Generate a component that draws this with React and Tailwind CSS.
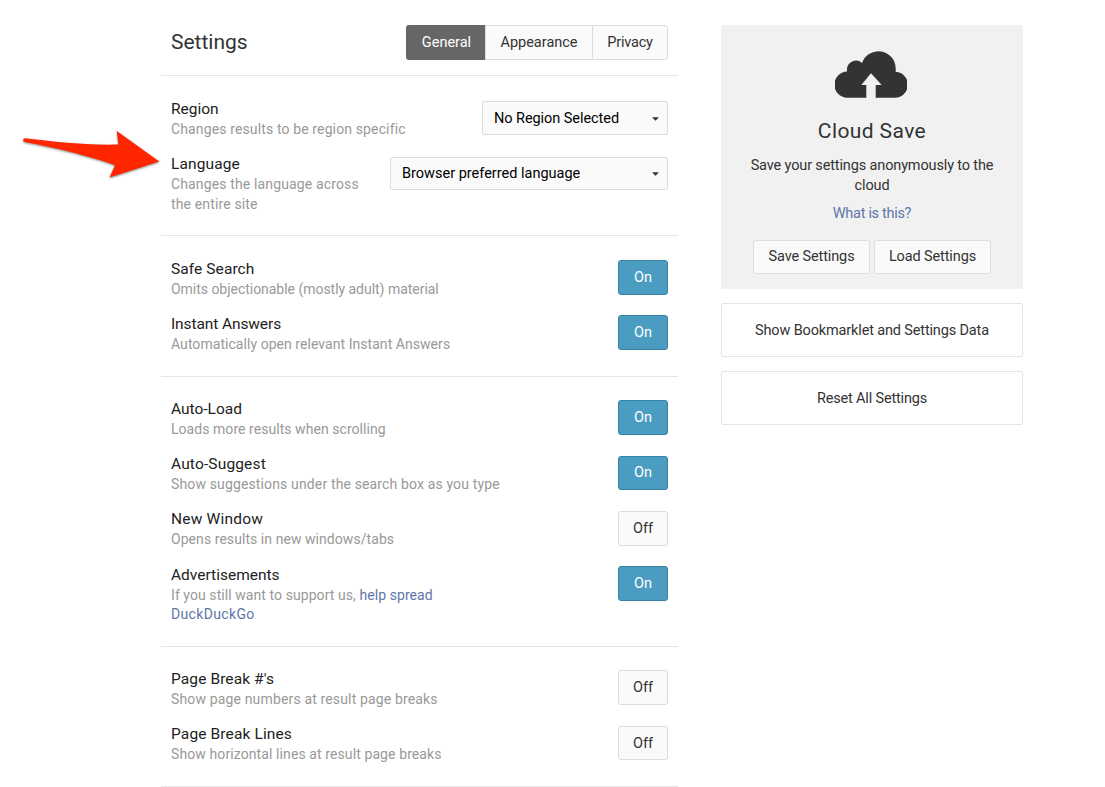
const link = "text-[#6076a8]";

function Toggle({ on, className = "" }) {
  const tone = on
    ? "bg-[#4a9dc1] border-[#3584a6] text-white"
    : "bg-[#fafafa] border-[#dddddd] text-[#333333]";
  return (
    <button
      className={`flex w-[50px] shrink-0 items-center justify-center rounded-[3px] border text-[14.5px] ${tone} ${className}`}
    >
      {on ? "On" : "Off"}
    </button>
  );
}

function Select({ label, className = "" }) {
  return (
    <button
      className={`flex shrink-0 items-center justify-between rounded-[2px] border border-[#dddddd] bg-[#fafafa] pr-[8px] text-[14.5px] text-black ${className}`}
    >
      <span>{label}</span>
      <svg width="7" height="4" viewBox="0 0 7 4">
        <path d="M0.2 0.2H6.8L3.9 3.6H3.1Z" fill="#333" />
      </svg>
    </button>
  );
}

function Row({ title, desc, track = "", titleTrack = "", className = "h-[55px]", children }) {
  return (
    <div className={`flex items-start justify-between ${className}`}>
      <div>
        <div className={`text-[15.5px] leading-[20px] text-[#222222] ${titleTrack}`}>{title}</div>
        <div className={`text-[14px] leading-[20px] whitespace-nowrap text-[#999999] ${track}`}>{desc}</div>
      </div>
      {children}
    </div>
  );
}

function Section({ className, children }) {
  return <section className={`border-b border-[#e5e5e5] px-[10px] ${className}`}>{children}</section>;
}

export default function App() {
  return (
    <div className="relative flex h-[787px] w-[1105px] items-start overflow-hidden bg-white pl-[161px] font-['Roboto','Liberation_Sans',sans-serif] text-[#333333]">
      <svg className="absolute top-[120px] left-[15px]" width="155" height="70" viewBox="15 120 155 70">
        <path
          d="M25 138.2C50 141 85 145.5 118.3 144.5L116.8 131L159.3 161.5L109.5 177.5L115 165.2C90 156 52 147 24.5 142C22.6 141.2 22.8 138.2 25 138.2Z"
          fill="#ff2600"
          className="drop-shadow-[0_1px_1px_rgba(0,0,0,0.45)]"
        />
      </svg>

      <main className="w-[517px]">
        <header className="flex h-[76px] items-start justify-between border-b border-[#e5e5e5] px-[10px] pt-[25px]">
          <h1 className="text-[21px] leading-[34px]">Settings</h1>
          <nav className="flex h-[35px] text-[14.5px]">
            <button className="w-[79px] rounded-l-[3px] bg-[#666666] pl-[2px] text-white">General</button>
            <button className="w-[107px] border-y border-l border-[#dddddd] bg-[#fafafa]">Appearance</button>
            <button className="w-[76px] rounded-r-[3px] border border-[#dddddd] bg-[#fafafa] tracking-[-0.2px]">Privacy</button>
          </nav>
        </header>

        <Section className="h-[160px] pt-[23px]">
          <Row title="Region" track="tracking-[0.13px]" desc="Changes results to be region specific">
            <Select label="No Region Selected" className="mt-[2px] h-[34px] w-[186px] pt-px pl-[11px] tracking-[-0.06px]" />
          </Row>
          <Row
            title="Language"
            titleTrack="tracking-[0.12px]"
            track="tracking-[0.14px]"
            desc={<>Changes the language across<br />the entire site</>}
          >
            <Select label="Browser preferred language" className="mt-[3px] h-[33px] w-[278px] pl-[11px]" />
          </Row>
        </Section>

        <Section className="h-[141px] pt-[23px]">
          <Row title="Safe Search" titleTrack="tracking-[0.08px]" track="tracking-[-0.03px]" desc="Omits objectionable (mostly adult) material">
            <Toggle on className="mt-px h-[35px]" />
          </Row>
          <Row title="Instant Answers" titleTrack="tracking-[-0.1px]" track="tracking-[0.05px]" desc="Automatically open relevant Instant Answers">
            <Toggle on className="mt-px h-[35px]" />
          </Row>
        </Section>

        <Section className="h-[270px] pt-[22px]">
          <Row title="Auto-Load" track="tracking-[0.05px]" desc="Loads more results when scrolling">
            <Toggle on className="mt-px h-[35px]" />
          </Row>
          <Row title="Auto-Suggest" titleTrack="tracking-[0.15px]" track="tracking-[0.14px]" desc="Show suggestions under the search box as you type">
            <Toggle on className="mt-[2px] h-[34px]" />
          </Row>
          <Row title="New Window" titleTrack="tracking-[0.2px]" track="tracking-[0.06px]" desc="Opens results in new windows/tabs" className="h-[56px]">
            <Toggle className="mt-[2px] h-[35px]" />
          </Row>
          <Row
            title="Advertisements"
            track="tracking-[0.07px]"
            desc={
              <>
                If you still want to support us,{" "}
                <a className={link}>
                  help spread
                  <br />
                  <span className="block leading-[19px] tracking-[0.35px]">DuckDuckGo</span>
                </a>
              </>
            }
          >
            <Toggle on className="mt-px h-[35px]" />
          </Row>
        </Section>

        <Section className="h-[140px] pt-[22px]">
          <Row title="Page Break #'s" titleTrack="tracking-[0.1px]" track="tracking-[0.15px]" desc="Show page numbers at result page breaks">
            <Toggle className="mt-px h-[35px]" />
          </Row>
          <Row title="Page Break Lines" titleTrack="tracking-[0.13px]" track="tracking-[0.1px]" desc="Show horizontal lines at result page breaks">
            <Toggle className="mt-[2px] h-[34px] pt-px" />
          </Row>
        </Section>
      </main>

      <aside className="mt-[25px] ml-[43px] w-[302px] text-[14.5px]">
        <div className="flex h-[264px] flex-col items-center rounded-[2px] bg-[#f1f1f1] pt-[26px] text-center">
          <svg className="mr-[2px]" width="72" height="47" viewBox="0 0 72 47">
            <path
              d="M13 46.8A13 13 0 0 1 12 20.6V19A9 9 0 0 1 27 12A17.3 17.3 0 0 1 60.7 17.5V20.8A13 13 0 0 1 59 46.8Z"
              fill="#333"
            />
            <path d="M36 22.3L46.7 34H40.7V47H31.3V34H26.3Z" fill="#f1f1f1" />
          </svg>
          <h2 className="mt-[20px] text-[21px] leading-[26px] tracking-[0.4px]">Cloud Save</h2>
          <p className="mt-[12px] leading-[20px] tracking-[-0.14px]">
            Save your settings anonymously to the<br />cloud
          </p>
          <a className={`mt-[8px] leading-[20px] tracking-[-0.3px] ${link}`}>What is this?</a>
          <div className="mt-[16px] flex gap-1 tracking-[-0.12px]">
            <button className="h-[34px] w-[117px] rounded-[3px] border border-[#dddddd] bg-[#fafafa]">Save Settings</button>
            <button className="h-[34px] w-[117px] rounded-[3px] border border-[#dddddd] bg-[#fafafa]">Load Settings</button>
          </div>
        </div>
        <button className="mt-[14px] block h-[54px] w-full rounded-[2px] border border-[#e5e5e5] pt-[2px] tracking-[-0.15px]">
          Show Bookmarklet and Settings Data
        </button>
        <button className="mt-[14px] block h-[54px] w-full rounded-[2px] border border-[#e5e5e5] pt-[2px] tracking-[-0.17px]">
          Reset All Settings
        </button>
      </aside>
    </div>
  );
}
